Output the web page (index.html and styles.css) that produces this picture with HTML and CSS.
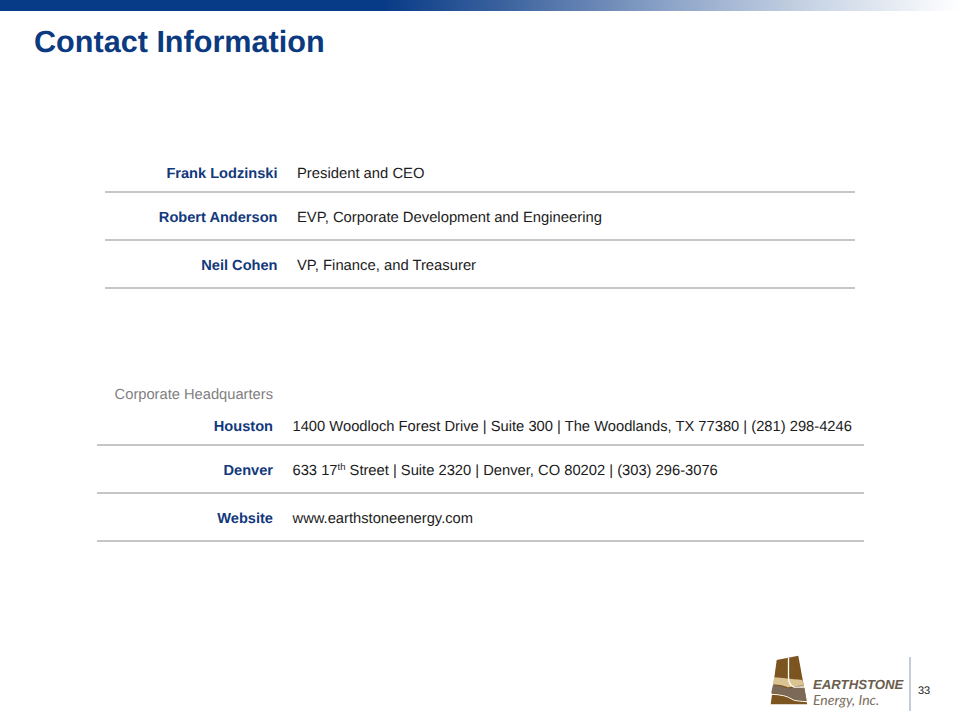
FILE: index.html
```html
<!DOCTYPE html>
<html lang="en">
<head>
<meta charset="utf-8">
<title>Contact Information</title>
<link rel="stylesheet" href="styles.css">
</head>
<body>
<div class="slide">
  <div class="topbar"></div>
  <h1 class="title">Contact Information</h1>
  <section class="people">
    <div class="row r1"><div class="name">Frank Lodzinski</div><div class="val">President and CEO</div></div>
    <div class="row r2"><div class="name">Robert Anderson</div><div class="val">EVP, Corporate Development and Engineering</div></div>
    <div class="row r2"><div class="name">Neil Cohen</div><div class="val">VP, Finance, and Treasurer</div></div>
  </section>
  <section class="offices">
    <div class="hq">Corporate Headquarters</div>
    <div class="row o1"><div class="name">Houston</div><div class="val">1400 Woodloch Forest Drive | Suite 300 | The Woodlands, TX 77380 | (281) 298-4246</div></div>
    <div class="row o2"><div class="name">Denver</div><div class="val">633 17<sup>th</sup> Street | Suite 2320 | Denver, CO 80202 | (303) 296-3076</div></div>
    <div class="row o2"><div class="name">Website</div><div class="val">www.earthstoneenergy.com</div></div>
  </section>
  <footer class="foot">
    <svg class="mark" viewBox="0 0 38 50" width="38" height="50" aria-hidden="true">
      <path d="M6.7 5 L28.3 .7 L37.2 49.3 L.7 49.3 Z" fill="#7b5420"/>
      <path d="M4.2 22.3 C9 22.6 12 23 15 23.3 C21 24 27 24.5 32.3 25 L34 30.6 C29 31 25 31.5 21.5 31.5 C19 33 17 32 13.3 30.7 C9 29.8 6 29.4 2.9 29.3 Z" fill="#dcc394"/>
      <path d="M2.8 30.3 C6 30.4 10 31 13 32 C16 33 20 34 23 33 C27 32.7 31 32.5 34.4 32.5 L36.6 45.7 C31 45.3 27 45 23.5 44 C20 42 17 40.3 13.3 39.5 C9 38.7 5 38.3 1.2 38.3 Z" fill="#7c6a58"/>
      <path d="M18.5 2.8 L18.5 22 C18.5 28 20 31 24 32 C28 32.5 31 32 35 31.8" fill="none" stroke="#fff" stroke-width="1.3"/>
      <path d="M1.2 39.3 C5 39.3 9 39.7 13.3 40.6 C17 41.4 20 43 23.5 45 C27 46 31 46.3 37 46.7" fill="none" stroke="#fff" stroke-width="1"/>
    </svg>
    <div class="brand">
      <div class="brand-a">EARTHSTONE</div>
      <div class="brand-b">Energy, Inc.</div>
    </div>
    <div class="vline"></div>
    <div class="page">33</div>
  </footer>
</div>
</body>
</html>
```
FILE: styles.css
```css
* { box-sizing: border-box; }
html, body { margin: 0; padding: 0; background: #fff; }
body { font-family: "Liberation Sans", Arial, sans-serif; text-rendering: geometricPrecision; }
.slide { width: 960px; height: 720px; position: relative; overflow: hidden; background: #fff; }
.topbar {
  height: 11px;
  background: linear-gradient(90deg, #083b87 0%, #083b87 40%, #3a619d 52%, #8ea5c9 70%, #c6d2e3 84%, #ffffff 100%);
}
.title {
  margin: 10px 0 0 34px;
  font-size: 30.6px;
  line-height: 42px;
  font-weight: 700;
  color: #0b3a80;
}
.people { margin: 90px 105px 0 105px; }
.offices { margin: 96px 96px 0 97px; }
.row { display: flex; align-items: center; border-bottom: 2px solid #c6c6c6; font-size: 14.8px; }
.name { color: #12397c; font-weight: 700; font-size: 14.6px; text-align: right; flex: none; }
.val { color: #1c1c1c; white-space: nowrap; }
.people .name { width: 172.5px; }
.people .val { margin-left: 19.5px; }
.offices .name { width: 176px; }
.offices .val { margin-left: 19.5px; font-size: 14.72px; }
.r1 { height: 40px; padding-top: 4px; }
.r2 { height: 48px; padding-top: 4px; }
.hq { color: #7f7f7f; font-size: 14.7px; line-height: 20px; width: 176px; text-align: right; }
.o1 { height: 41px; padding-top: 5px; }
.o2 { height: 48px; padding-top: 3px; }
sup { font-size: 9.5px; line-height: 0; vertical-align: 5px; }
.foot { position: absolute; left: 770px; top: 655px; width: 170px; height: 56px; }
.mark { position: absolute; left: 0; top: 0; }
.brand { position: absolute; left: 43px; top: 22px; white-space: nowrap; }
.brand-a { font-size: 13.2px; line-height: 15px; font-weight: 700; font-style: italic; color: #6b5d4d; }
.brand-b { font-size: 14px; line-height: 16px; font-family: Lato, sans-serif; font-style: italic; color: #7a6c5c; }
.vline { position: absolute; left: 139px; top: 2px; width: 2px; height: 54px; background: #c4ccd8; }
.page { position: absolute; left: 148px; top: 30px; font-size: 11px; line-height: 13px; color: #222; }
```
